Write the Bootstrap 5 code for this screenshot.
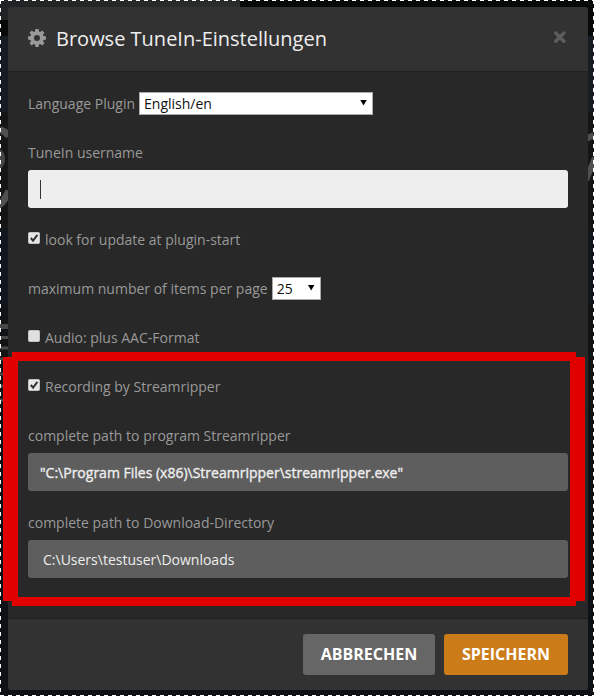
<!DOCTYPE html>
<html lang="de">
<head>
<meta charset="utf-8">
<meta name="viewport" content="width=device-width, initial-scale=1">
<title>Browse TuneIn-Einstellungen</title>
<link href="https://cdn.jsdelivr.net/npm/bootstrap@5.3.0/dist/css/bootstrap.min.css" rel="stylesheet">
<style>
html,body{height:100%}
body{width:594px;height:696px;overflow:hidden;background:#0e1116;font-family:"Open Sans",sans-serif;font-size:14px;line-height:20px;color:#999}
.backdrop-art,.dash-frame{position:absolute;left:0;top:0;pointer-events:none}
.settings-dialog{position:relative;margin:7px 14px 0 8px;width:580px;height:683px;background:#282828;border-radius:3px;overflow:hidden}
.dialog-head{height:65px;background:#323232;border-bottom:1px solid #1f1f1f;padding:0 20px;color:#eee}
.dialog-head h1{font-size:20px;line-height:30px;font-weight:400;margin:0 0 0 10px}
.dialog-head svg{margin-bottom:2px}
.dialog-body{height:546px;padding:20px 20px 0}
.dialog-foot{height:72px;background:#323232;border-top:1px solid #1f1f1f;padding:15px 20px 0;gap:9px}
.line{height:23px;margin-bottom:26px;white-space:nowrap}
.label-line{height:20px;margin-bottom:7px;padding-top:2px;box-sizing:content-box;height:20px}
.label-after-box{padding-top:0}
.fake-select{height:23px;border:1px solid #a9a9a9;background:#fff;color:#111;padding:0 5px 0 4px;margin-left:4px}
.tri{width:7px;height:6px;background:#000;clip-path:polygon(0 0,100% 0,50% 100%);margin-bottom:2px}
.text-box{height:38px;border-radius:3px;background:#5e5e5e;color:#eee;padding:0 12px;margin-bottom:22px}
.text-box.focused{background:#eee;margin-bottom:20px}
.program-path{-webkit-text-stroke:.35px #eee;padding-top:1px}
.download-path{padding:2px 12px 0 15px}
.caret{width:1px;height:19px;background:#333}
.tick{width:12px;height:12px;margin-right:5px;margin-top:-4px;flex:none}
.action{height:41px;border:0;border-radius:3px;color:#fff;font-size:16px;font-weight:700;padding:0;line-height:41px}
.cancel{width:132px;background:#666}.save{width:124px;background:#cc7b19}
</style>
<script src="https://cdn.jsdelivr.net/npm/bootstrap@5.3.0/dist/js/bootstrap.bundle.min.js"></script>
</head>
<body class="position-relative">
<svg class="backdrop-art" width="594" height="696">
<defs><linearGradient id="top" x2="1"><stop stop-color="#202323"/><stop offset="1" stop-color="#2b2d2d"/></linearGradient></defs>
<rect width="594" height="36" fill="#070909"/><rect width="240" height="20" fill="url(#top)"/>
<rect y="36" width="594" height="76" fill="#171c22"/><rect y="112" width="594" height="118" fill="#151515"/>
<rect y="230" width="594" height="74" fill="#11171c"/><rect y="304" width="594" height="110" fill="#121314"/>
<path d="M0 129.500Q5 131 9 136M-2 206Q4 202 9 191" fill="none" stroke="#505050" stroke-width="7"/><circle cx="-8" cy="159" r="13" fill="#464646"/>
<path d="M586 139l8-4M586 180l9-22" stroke="#505050" stroke-width="6"/>
<g stroke="#484848"><path d="M0 326.500h8" stroke-width="5"/><path d="M0 337.500h8M0 348h8M0 359h8M0 374h8M0 386h8M0 400h8" stroke-width="3"/></g>
</svg>
<main class="settings-dialog d-flex flex-column">
<header class="dialog-head d-flex align-items-center">
<svg width="18" height="18" viewBox="0 0 18 18"><g fill="#999"><circle cx="9" cy="9" r="6.800"/><path d="M7.400 0h3.200l.6 4H6.800zM7.400 18h3.200l.6-4H6.800zM0 7.400v3.200l4 .6V6.800zM18 7.400v3.200l-4 .6V6.800z"/><path transform="rotate(45 9 9)" d="M7.400 0h3.200l.6 4H6.800zM7.400 18h3.200l.6-4H6.800zM0 7.400v3.200l4 .6V6.800zM18 7.400v3.200l-4 .6V6.800z"/></g><circle cx="9" cy="9" r="3" fill="#323232"/></svg>
<h1>Browse TuneIn-Einstellungen</h1>
<svg class="ms-auto me-0" width="15" height="16" viewBox="0 0 15 16"><path d="M2.700 3l8.200 8.200m0-8.200l-8.200 8.200" stroke="#5d5d5d" stroke-width="3.400" stroke-linecap="round"/></svg>
</header>
<section class="dialog-body">
<div class="line d-flex align-items-center"><span>Language Plugin</span><div class="fake-select d-flex align-items-center justify-content-between" style="width:234px"><span>English/en</span><i class="tri"></i></div></div>
<div class="label-line">TuneIn username</div>
<div class="text-box focused d-flex align-items-center"><i class="caret"></i></div>
<div class="line d-flex align-items-center"><svg class="tick" viewBox="0 0 12 12"><rect x=".5" y=".5" width="11" height="11" rx="1" fill="#e6e6e6" stroke="#c4c4c4"/><path d="M2.800 6l2.300 2.600L9.400 2.800" fill="none" stroke="#333" stroke-width="2"/></svg>look for update at plugin-start</div>
<div class="line d-flex align-items-center"><span>maximum number of items per page</span><div class="fake-select d-flex align-items-center justify-content-between" style="width:49px"><span>25</span><i class="tri"></i></div></div>
<div class="line d-flex align-items-center"><svg class="tick" viewBox="0 0 12 12"><rect x=".5" y=".5" width="11" height="11" rx="1" fill="#e0e0e0" stroke="#c4c4c4"/></svg>Audio: plus AAC-Format</div>
<div class="line d-flex align-items-center"><svg class="tick" viewBox="0 0 12 12"><rect x=".5" y=".5" width="11" height="11" rx="1" fill="#e6e6e6" stroke="#c4c4c4"/><path d="M2.800 6l2.300 2.600L9.400 2.800" fill="none" stroke="#333" stroke-width="2"/></svg>Recording by Streamripper</div>
<div class="label-line">complete path to program Streamripper</div>
<div class="text-box d-flex align-items-center program-path">"C:\Program Files (x86)\Streamripper\streamripper.exe"</div>
<div class="label-line label-after-box">complete path to Download-Directory</div>
<div class="text-box d-flex align-items-center download-path">C:\Users\testuser\Downloads</div>
</section>
<footer class="dialog-foot d-flex justify-content-end"><button class="btn action cancel">ABBRECHEN</button><button class="btn action save">SPEICHERN</button></footer>
</main>
<svg class="dash-frame" width="594" height="696"><path d="M12 352H576V357H585V601H576V606H12V601H3V357H12ZM18 361V597H570V361Z" fill="#e10000" fill-rule="evenodd"/><g fill="none" stroke="#fff" stroke-dasharray="4 4"><path d="M0 .5H594M.5 0V696M593.500 0V696M0 695.500H594"/></g></svg>
</body>
</html>
